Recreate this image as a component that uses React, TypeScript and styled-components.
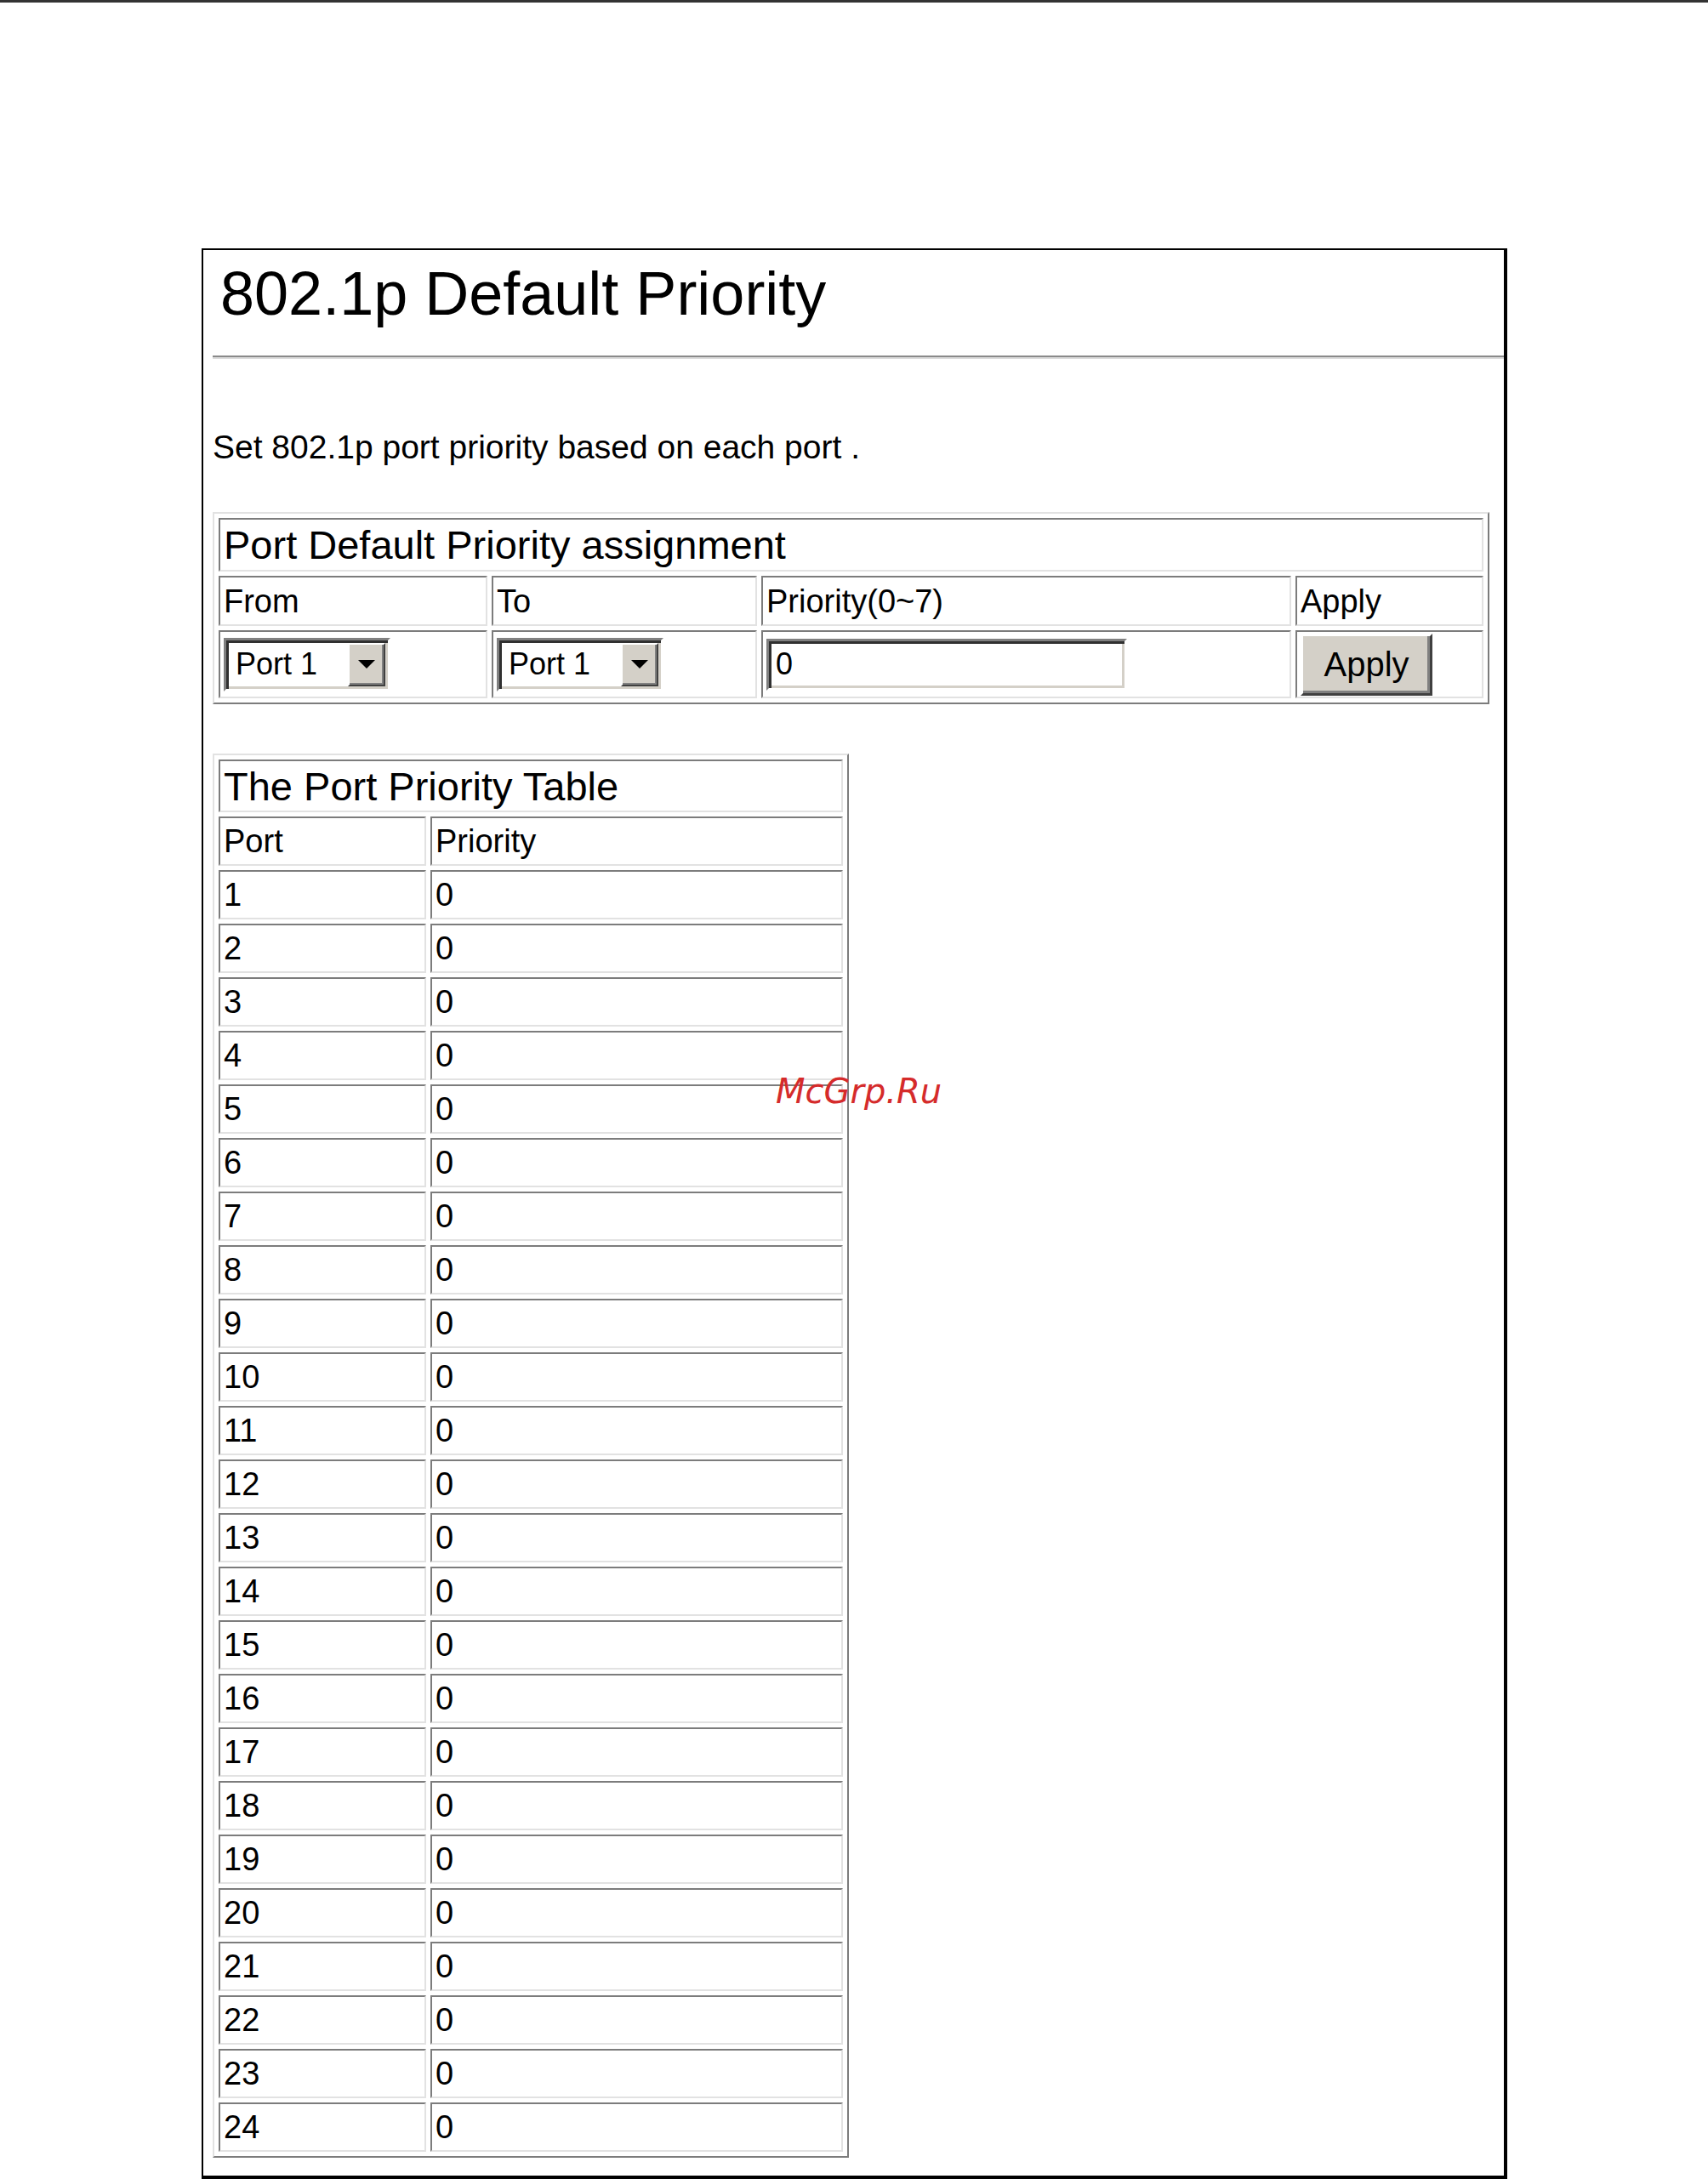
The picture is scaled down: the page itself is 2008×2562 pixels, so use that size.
import styled, { createGlobalStyle } from "styled-components";

const GlobalStyle = createGlobalStyle`
  html, body {
    margin: 0;
    padding: 0;
    background: #fff;
  }
  body {
    font-family: "Liberation Sans", Arial, sans-serif;
    color: #000;
  }
`;

const ports = Array.from({ length: 24 }, (_, i) => ({ port: i + 1, priority: 0 }));

const App = () => {
    return (
        <Page>
            <GlobalStyle />
            <TopRule />
            <Frame>
                <Title>802.1p Default Priority</Title>
                <Divider />
                <Content>
                    <Description>Set 802.1p port priority based on each port .</Description>

                    <Grid $top={54}>
                        <colgroup>
                            <Col $w={316} />
                            <Col $w={312} />
                            <Col $w={623} />
                            <Col $w={221} />
                        </colgroup>
                        <tbody>
                            <tr>
                                <CaptionCell colSpan={4} $h={63}>Port Default Priority assignment</CaptionCell>
                            </tr>
                            <tr>
                                <Cell $h={59}>From</Cell>
                                <Cell $h={59}>To</Cell>
                                <Cell $h={59}>Priority(0~7)</Cell>
                                <Cell $h={59}>Apply</Cell>
                            </tr>
                            <tr>
                                <Cell $h={80}>
                                    <FakeSelect>
                                        <SelectText>Port 1</SelectText>
                                        <DropButton><Arrow /></DropButton>
                                    </FakeSelect>
                                </Cell>
                                <Cell $h={80}>
                                    <FakeSelect>
                                        <SelectText>Port 1</SelectText>
                                        <DropButton><Arrow /></DropButton>
                                    </FakeSelect>
                                </Cell>
                                <Cell $h={80}>
                                    <TextInput readOnly value="0" />
                                </Cell>
                                <Cell $h={80}>
                                    <ApplyButton type="button">Apply</ApplyButton>
                                </Cell>
                            </tr>
                        </tbody>
                    </Grid>

                    <Grid $top={58}>
                        <colgroup>
                            <Col $w={244} />
                            <Col $w={485} />
                        </colgroup>
                        <tbody>
                            <tr>
                                <CaptionCell colSpan={2} $h={62}>The Port Priority Table</CaptionCell>
                            </tr>
                            <tr>
                                <Cell $h={58}>Port</Cell>
                                <Cell $h={58}>Priority</Cell>
                            </tr>
                            {ports.map((p) => (
                                <tr key={p.port}>
                                    <Cell $h={58}>{p.port}</Cell>
                                    <Cell $h={58}>{p.priority}</Cell>
                                </tr>
                            ))}
                        </tbody>
                    </Grid>
                </Content>
            </Frame>
            <Watermark>McGrp.Ru</Watermark>
        </Page>
    );
};

export default App;

const Page = styled.div`
    position: relative;
    width: 2008px;
    height: 2562px;
    overflow: hidden;
`;

const TopRule = styled.div`
    height: 3px;
    background: #333;
`;

const Frame = styled.div`
    box-sizing: border-box;
    margin: 289px 0 0 237px;
    width: 1535px;
    height: 2270px;
    border-style: solid;
    border-color: #000;
    border-width: 2px 4px 4px 2px;
`;

const Title = styled.h1`
    margin: 10px 0 0 20px;
    font-size: 72px;
    line-height: 82px;
    font-weight: normal;
`;

const Divider = styled.hr`
    height: 0;
    margin: 32px 0 0 11px;
    border: none;
    border-top: 2px solid #8a8a8a;
    border-bottom: 2px solid #dcdcdc;
`;

const Content = styled.div`
    padding-left: 11px;
`;

const Description = styled.p`
    margin: 81px 0 0;
    font-size: 39px;
    line-height: 45px;
`;

const Grid = styled.table<{ $top: number }>`
    margin-top: ${(p) => p.$top}px;
    table-layout: fixed;
    border-collapse: separate;
    border-spacing: 5px;
    border-style: solid;
    border-width: 2px;
    border-color: #e2e2e2 #7c7c7c #7c7c7c #e2e2e2;
`;

const Col = styled.col<{ $w: number }>`
    width: ${(p) => p.$w}px;
`;

const Cell = styled.td<{ $h: number }>`
    box-sizing: border-box;
    height: ${(p) => p.$h}px;
    padding: 0 4px;
    vertical-align: middle;
    font-size: 38px;
    line-height: 1;
    white-space: nowrap;
    border-style: solid;
    border-width: 2px;
    border-color: #7c7c7c #e2e2e2 #e2e2e2 #7c7c7c;
`;

const CaptionCell = styled(Cell)`
    font-size: 47px;
`;

const FakeSelect = styled.div`
    box-sizing: border-box;
    display: flex;
    align-items: stretch;
    width: 196px;
    height: 63px;
    border: 3px solid;
    border-color: #808080 #fff #fff #808080;
    box-shadow: inset 3px 3px 0 #303030, inset -3px -3px 0 #d4d0c8;
    padding: 3px;
    background: #fff;
`;

const SelectText = styled.span`
    flex: 1;
    display: flex;
    align-items: center;
    padding-left: 8px;
    font-size: 36px;
`;

const DropButton = styled.span`
    box-sizing: border-box;
    width: 44px;
    display: flex;
    align-items: center;
    justify-content: center;
    background: #d4d0c8;
    border: 2px solid;
    border-color: #fff #404040 #404040 #fff;
    box-shadow: inset -2px -2px 0 #808080;
`;

const Arrow = styled.span`
    width: 0;
    height: 0;
    border-left: 10px solid transparent;
    border-right: 10px solid transparent;
    border-top: 10px solid #000;
`;

const TextInput = styled.input`
    box-sizing: border-box;
    display: block;
    width: 424px;
    height: 61px;
    margin: 0;
    padding: 0 0 0 8px;
    font-family: "Liberation Sans", Arial, sans-serif;
    font-size: 36px;
    color: #000;
    background: #fff;
    outline: none;
    border: 3px solid;
    border-color: #808080 #fff #fff #808080;
    box-shadow: inset 3px 3px 0 #303030, inset -3px -3px 0 #d4d0c8;
`;

const ApplyButton = styled.button`
    box-sizing: border-box;
    display: block;
    width: 155px;
    height: 73px;
    margin: 0;
    padding: 0;
    font-family: "Liberation Sans", Arial, sans-serif;
    font-size: 40px;
    color: #000;
    background: #d4d0c8;
    border: 3px solid;
    border-color: #fff #404040 #404040 #fff;
    box-shadow: inset -3px -3px 0 #808080;
`;

const Watermark = styled.div`
    position: absolute;
    left: 912px;
    top: 1263px;
    font-family: "DejaVu Sans", sans-serif;
    font-style: italic;
    font-size: 40px;
    line-height: 40px;
    color: #d52b2b;
    pointer-events: none;
`;
